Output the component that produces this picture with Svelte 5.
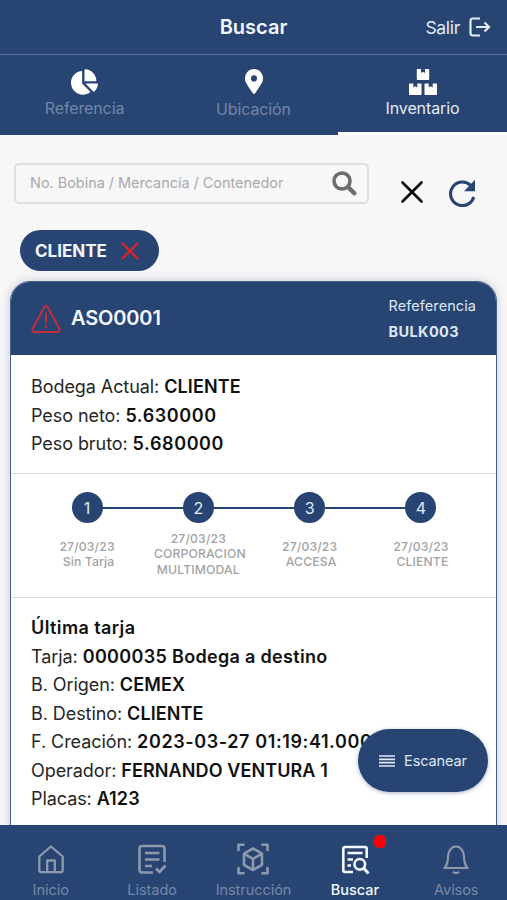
<script lang="ts">
  interface Step {
    date: string;
    place: string[];
  }

  const tabs = [
    { id: 'referencia', label: 'Referencia' },
    { id: 'ubicacion', label: 'Ubicación' },
    { id: 'inventario', label: 'Inventario' },
  ];

  const steps: Step[] = [
    { date: '27/03/23', place: ['Sin Tarja'] },
    { date: '27/03/23', place: ['CORPORACION', 'MULTIMODAL'] },
    { date: '27/03/23', place: ['ACCESA'] },
    { date: '27/03/23', place: ['CLIENTE'] },
  ];

  const weights = [
    { label: 'Bodega Actual:', value: 'CLIENTE' },
    { label: 'Peso neto:', value: '5.630000' },
    { label: 'Peso bruto:', value: '5.680000' },
  ];

  const details = [
    { label: 'Tarja:', value: '0000035 Bodega a destino' },
    { label: 'B. Origen:', value: 'CEMEX' },
    { label: 'B. Destino:', value: 'CLIENTE' },
    { label: 'F. Creación:', value: '2023-03-27 01:19:41.000' },
    { label: 'Operador:', value: 'FERNANDO VENTURA 1' },
    { label: 'Placas:', value: 'A123' },
  ];

  const navItems = [
    { id: 'inicio', label: 'Inicio' },
    { id: 'listado', label: 'Listado' },
    { id: 'instruccion', label: 'Instrucción' },
    { id: 'buscar', label: 'Buscar' },
    { id: 'avisos', label: 'Avisos' },
  ];

  let activeTab = $state('inventario');
  let activeNav = $state('buscar');
  let query = $state('');

  function valueClass(value: string): string {
    if (/^[\d.:\s-]+$/.test(value)) return 'numeric';
    return /^\d/.test(value) ? 'mixed' : '';
  }
</script>

<div class="app">
  <header class="header">
    <h1 class="header__title">Buscar</h1>
    <button class="header__exit">
      <span>Salir</span>
      <svg width="22" height="20" viewBox="0 0 22 20" fill="none" stroke="currentColor" stroke-width="2.200">
        <path d="M11 1.500H4Q1.500 1.500 1.500 4v12Q1.500 18.500 4 18.500h7" />
        <path d="M7 10h13M15.500 5.500 20 10l-4.500 4.500" />
      </svg>
    </button>
  </header>

  <div class="tabs">
    {#each tabs as tab (tab.id)}
      <button
        class="tab tab--{tab.id}"
        class:tab--active={activeTab === tab.id}
        onclick={() => (activeTab = tab.id)}
      >
        {#if tab.id === 'referencia'}
          <svg width="27" height="26" viewBox="0 0 544 512" fill="#fff">
            <path d="M527.79 288H290.5l158.03 158.03c6.04 6.04 15.98 6.53 22.19.68 38.7-36.46 65.32-85.61 73.13-140.86 1.34-9.46-6.51-17.85-16.06-17.85zm-15.83-64.8C503.72 103.74 408.26 8.28 288.8.04 279.68-.59 272 7.1 272 16.24V240h223.77c9.14 0 16.82-7.68 16.19-16.8zM224 288V50.71c0-9.55-8.39-17.4-17.84-16.06C86.99 51.49-4.1 155.6.14 280.37 4.5 408.51 114.83 513.59 243.03 511.98c50.4-.63 96.97-16.87 135.26-44.03 7.9-5.6 8.42-17.23 1.57-24.08L224 288z" />
          </svg>
        {:else if tab.id === 'ubicacion'}
          <svg width="18" height="25" viewBox="0 0 384 512" fill="#fff" preserveAspectRatio="none">
            <path d="M172.268 501.67C26.97 291.031 0 269.413 0 192 0 85.961 85.961 0 192 0s192 85.961 192 192c0 77.413-26.97 99.031-172.268 309.67-9.535 13.774-29.93 13.773-39.464 0zM192 256a64 64 0 1 0 0-128 64 64 0 0 0 0 128z" />
          </svg>
        {:else}
          <svg width="28" height="26" viewBox="0 0 28 26" fill="#fff">
            <path d="M8.500 0H12v4l2-1.200L16 4V0h3.500q.7 0 .7.7v9.600q0 .7-.7.7h-11q-.7 0-.7-.7V.7q0-.7.7-.7z" />
            <path d="M.7 14.500h3.600v4l2-1.200 2 1.200v-4h3.500q.7 0 .7.700v10.100q0 .7-.7.7H.7q-.7 0-.7-.7V15.200q0-.7.7-.7z" />
            <path d="M16.200 14.500h3.500v4l2-1.200 2 1.200v-4h3.600q.7 0 .7.700v10.100q0 .7-.7.7H16.200q-.7 0-.7-.7V15.200q0-.7.7-.7z" />
          </svg>
        {/if}
        <span class="tab__label">{tab.label}</span>
      </button>
    {/each}
  </div>

  <main class="content">
    <div class="search">
      <div class="search__field">
        <input bind:value={query} placeholder="No. Bobina / Mercancía / Contenedor" aria-label="Buscar" />
        <svg width="26" height="26" viewBox="0 0 26 26" fill="none" stroke="#6d6d6d">
          <circle cx="11" cy="10" r="8" stroke-width="3.600" />
          <path d="m17.500 16.500 5.800 5.800" stroke-width="4.400" stroke-linecap="round" />
        </svg>
      </div>
      <button class="search__clear" aria-label="Limpiar">
        <svg width="22" height="22" viewBox="0 0 22 22" stroke="#0c0c0c" stroke-width="2.700" stroke-linecap="round">
          <path d="M1.500 1.500l19 19M20.500 1.500l-19 19" />
        </svg>
      </button>
      <button class="search__reload" aria-label="Recargar">
        <svg width="28" height="28" viewBox="0 0 28 28">
          <path d="M22.800 6.500A11.800 11.800 0 1 0 25.700 18" fill="none" stroke="#284473" stroke-width="3.100" />
          <path d="M27 .8v11.400H16z" fill="#284473" />
        </svg>
      </button>
    </div>

    <div class="chip">
      <span>CLIENTE</span>
      <svg width="18" height="18" viewBox="0 0 18 18" stroke="#de2228" stroke-width="2.300">
        <path d="M1 1l16 16M17 1L1 17" />
      </svg>
    </div>

    <article class="card">
      <div class="card__header">
        <svg width="30" height="28" viewBox="0 0 30 28" fill="none" stroke="#c12c3f" stroke-width="2" stroke-linejoin="round">
          <path d="M13.300 2.200q1.700-2.300 3.400 0L28.500 24q1 2.700-1.800 2.900H3.300Q.5 26.700 1.500 24z" />
          <path d="M15 8.500v9" stroke-linecap="round" />
          <circle cx="15" cy="21.500" r=".5" />
        </svg>
        <h2 class="card__code">ASO0001</h2>
        <div class="card__ref">
          <span>Refeferencia</span>
          <strong>BULK003</strong>
        </div>
      </div>

      <section class="card__section card__section--weights">
        {#each weights as row (row.label)}
          <p>{row.label} <strong class={valueClass(row.value)}>{row.value}</strong></p>
        {/each}
      </section>

      <section class="steps">
        {#each steps as step, i (i)}
          <div class="step">
            <div class="step__dot">{i + 1}</div>
            <div class="step__text">
              <span>{step.date}</span>
              {#each step.place as line, n (line)}
                <span class:step__place={n === 0}>{line}</span>
              {/each}
            </div>
          </div>
        {/each}
      </section>

      <section class="card__section card__section--details">
        <p><strong class="card__subtitle">Última tarja</strong></p>
        {#each details as row (row.label)}
          <p>{row.label} <strong class={valueClass(row.value)}>{row.value}</strong></p>
        {/each}
      </section>
    </article>
  </main>

  <button class="scan">
    <svg width="16" height="12" viewBox="0 0 16 12" stroke="currentColor" stroke-width="1.700">
      <path d="M0 1h16M0 4.300h16M0 7.700h16M0 11h16" />
    </svg>
    <span>Escanear</span>
  </button>

  <nav class="nav">
    {#each navItems as item (item.id)}
      <button
        class="nav__item"
        class:nav__item--active={activeNav === item.id}
        onclick={() => (activeNav = item.id)}
      >
        <svg width="32" height="32" viewBox="0 0 32 32" fill="none" stroke="currentColor" stroke-width="2.600" stroke-linejoin="round">
          {#if item.id === 'inicio'}
            <path d="M4.300 13.500 16 3.500l11.700 10V27q0 2.200-2.200 2.200h-19Q4.300 29.200 4.300 27z" stroke-width="2.300" />
            <path d="M12.200 29V17.500h7.600V29" stroke-width="2.300" />
          {:else if item.id === 'listado'}
            <path d="M17 29.500H6Q3.500 29.500 3.500 27V5.500Q3.500 3 6 3h20q2.500 0 2.500 2.500V19" />
            <path d="M9 10h14.500M9 16.500h14.500M9 23h7M20 25.500l3.500 3.500 6-6.500" />
          {:else if item.id === 'instruccion'}
            <path d="M1.500 8V1.800h6M24.500 1.800h6V8M30.500 24v6.200h-6M7.500 30.200h-6V24" />
            <path d="M16 5.500l9 5.100v11.200l-9 5.200-9-5.200V10.600z" />
            <path d="M7 10.600l9 5.200 9-5.200M16 15.800V27" />
          {:else if item.id === 'buscar'}
            <path d="M14 29H6Q4.300 29 4.300 27.300V5.700Q4.300 4 6 4h20q1.700 0 1.700 1.700V15" />
            <path d="M8.500 10H23.500M8.500 16.500H14M8.500 22.500H12" />
            <circle cx="20.800" cy="21.300" r="5.300" />
            <path d="M24.500 25l5 5.500" stroke-width="3" />
          {:else}
            <path d="M4.500 25q3.500-4 3.500-11.500a8 10 0 0 1 16 0Q24 21 27.500 25z" stroke-width="2.200" />
            <path d="M13 28.800q3 2.800 6 0" stroke-width="2.200" />
          {/if}
        </svg>
        <span>{item.label}</span>
        {#if item.id === 'buscar'}
          <i class="nav__badge"></i>
        {/if}
      </button>
    {/each}
  </nav>
</div>

<style>
  :global(body) {
    margin: 0;
  }

  .app {
    --blue: #284473;
    position: relative;
    box-sizing: border-box;
    width: 507px;
    height: 900px;
    display: flex;
    flex-direction: column;
    overflow: hidden;
    background: #f7f7f8;
    color: #262626;
    font-family: Inter, 'Liberation Sans', sans-serif;
  }

  button {
    padding: 0;
    border: none;
    background: none;
    color: inherit;
    font: inherit;
    cursor: pointer;
  }

  svg {
    display: block;
    flex-shrink: 0;
  }

  .header {
    flex: none;
    height: 54px;
    display: grid;
    grid-template-columns: 1fr auto 1fr;
    align-items: center;
    padding: 0 16px;
    border-bottom: 1px solid #5d7399;
    background: var(--blue);
    color: #f3f7ff;
  }

  .header__title {
    grid-column: 2;
    margin: 0;
    font-size: 20px;
    font-weight: 600;
  }

  .header__exit {
    justify-self: end;
    display: flex;
    align-items: center;
    gap: 9px;
    font-size: 17.500px;
    letter-spacing: -0.3px;
    color: #e3ebf7;
  }

  .tabs {
    flex: none;
    height: 80px;
    display: grid;
    grid-template-columns: repeat(3, 1fr);
    background: var(--blue);
  }

  .tab {
    display: flex;
    flex-direction: column;
    align-items: center;
    gap: 3px;
    padding-top: 14px;
    border-bottom: 3px solid transparent;
    color: #7386a5;
    font-size: 16px;
    line-height: 20px;
    letter-spacing: -0.12px;
  }

  .tab--ubicacion {
    gap: 5px;
  }

  .tab--active {
    border-bottom-color: #fff;
    color: #e3ebf7;
  }

  .content {
    flex: 1;
    min-height: 0;
    padding: 28px 10px 0;
    overflow: hidden;
  }

  .search {
    display: flex;
    align-items: flex-start;
    padding-left: 4px;
  }

  .search__field {
    box-sizing: border-box;
    width: 355px;
    height: 41px;
    display: flex;
    align-items: center;
    padding: 0 10px 0 14px;
    border: 2px solid #dedfe0;
    border-radius: 5px;
  }

  .search__field input {
    flex: 1;
    min-width: 0;
    padding: 0 0 2px;
    border: none;
    outline: none;
    background: none;
    font: 14.500px Inter, 'Liberation Sans', sans-serif;
    letter-spacing: -0.04px;
  }

  .search__field input::placeholder {
    color: #a9a9aa;
    opacity: 1;
  }

  .search__clear {
    margin: 18px 0 0 32px;
  }

  .search__reload {
    margin: 16px 0 0 25px;
  }

  .chip {
    box-sizing: border-box;
    width: 139px;
    height: 41px;
    display: flex;
    align-items: center;
    gap: 14px;
    margin: 23px 0 0 10px;
    padding-left: 15px;
    border-radius: 21px;
    background: var(--blue);
    color: #f3f7ff;
    font-size: 17px;
    font-weight: 700;
  }

  .card {
    box-sizing: border-box;
    width: 487px;
    height: 700px;
    margin-top: 10px;
    overflow: hidden;
    border: 1px solid #4a5f86;
    border-radius: 20px;
    background: #fff;
    box-shadow: 0 0 10px rgba(40, 68, 115, 0.25);
  }

  .card__header {
    box-sizing: border-box;
    height: 73px;
    display: flex;
    align-items: center;
    padding: 0 20px;
    background: var(--blue);
    color: #f3f7ff;
  }

  .card__code {
    margin: 0 0 2px 10px;
    font-size: 20px;
    font-weight: 600;
    letter-spacing: -0.15px;
  }

  .card__ref {
    display: flex;
    flex-direction: column;
    margin-left: auto;
    font-size: 14.500px;
    line-height: 26px;
    letter-spacing: 0.08px;
    color: #dde7f6;
  }

  .card__ref strong {
    letter-spacing: 0.4px;
  }

  .card__section {
    padding: 0 20px;
    font-size: 18px;
    line-height: 28.550px;
    letter-spacing: -0.07px;
  }

  .card__section--weights {
    height: 100px;
    padding-top: 18px;
    border-bottom: 1px solid #d9dbde;
  }

  .card__section--details {
    padding-top: 16px;
  }

  .card__section p {
    margin: 0;
    white-space: nowrap;
  }

  .card__section strong {
    font-weight: 600;
    letter-spacing: 0.1px;
    color: #111;
  }

  .card__section .card__subtitle {
    letter-spacing: 0.4px;
  }

  .card__section .numeric {
    letter-spacing: 0.6px;
  }

  .card__section .mixed {
    letter-spacing: 0.32px;
  }

  .steps {
    box-sizing: border-box;
    height: 124px;
    display: grid;
    grid-template-columns: repeat(4, 111.300px);
    justify-content: center;
    padding: 18px 0 0 1px;
    border-bottom: 1px solid #d9dbde;
  }

  .step {
    position: relative;
    display: flex;
    flex-direction: column;
    align-items: center;
  }

  .step:not(:last-child)::after {
    content: '';
    position: absolute;
    top: 15px;
    left: calc(50% + 15px);
    width: calc(100% - 30px);
    height: 2px;
    background: var(--blue);
  }

  .step__dot {
    width: 31px;
    height: 31px;
    border-radius: 50%;
    background: var(--blue);
    color: #e3ebf7;
    font-size: 16px;
    line-height: 32px;
    text-align: center;
  }

  .step__text {
    height: 62px;
    display: flex;
    flex-direction: column;
    align-items: center;
    justify-content: center;
    font-size: 12.200px;
    font-weight: 500;
    line-height: 15.200px;
    letter-spacing: 0.15px;
    color: #a2a2a3;
  }

  .step__place {
    padding-left: 3px;
  }

  .scan {
    position: absolute;
    right: 19px;
    bottom: 108px;
    width: 130px;
    height: 63px;
    display: flex;
    align-items: center;
    justify-content: center;
    gap: 9px;
    border-radius: 32px;
    background: var(--blue);
    box-shadow: 0 1px 4px rgba(40, 68, 115, 0.4);
    color: #dde7f6;
    font-size: 14.500px;
    letter-spacing: -0.1px;
  }

  .nav {
    flex: none;
    height: 75px;
    display: grid;
    grid-template-columns: repeat(5, 1fr);
    background: var(--blue);
  }

  .nav__item {
    position: relative;
    display: flex;
    flex-direction: column;
    align-items: center;
    gap: 5px;
    padding-top: 18px;
    color: #7788a5;
    font-size: 14.500px;
    line-height: 20px;
    letter-spacing: -0.05px;
  }

  .nav__item svg {
    color: #8e99ab;
  }

  .nav__item--active,
  .nav__item--active svg {
    color: #f3f7ff;
    font-weight: 500;
  }

  .nav__badge {
    position: absolute;
    top: 10px;
    left: 70px;
    width: 12px;
    height: 13px;
    border-radius: 5px;
    background: #fb0007;
  }
</style>
